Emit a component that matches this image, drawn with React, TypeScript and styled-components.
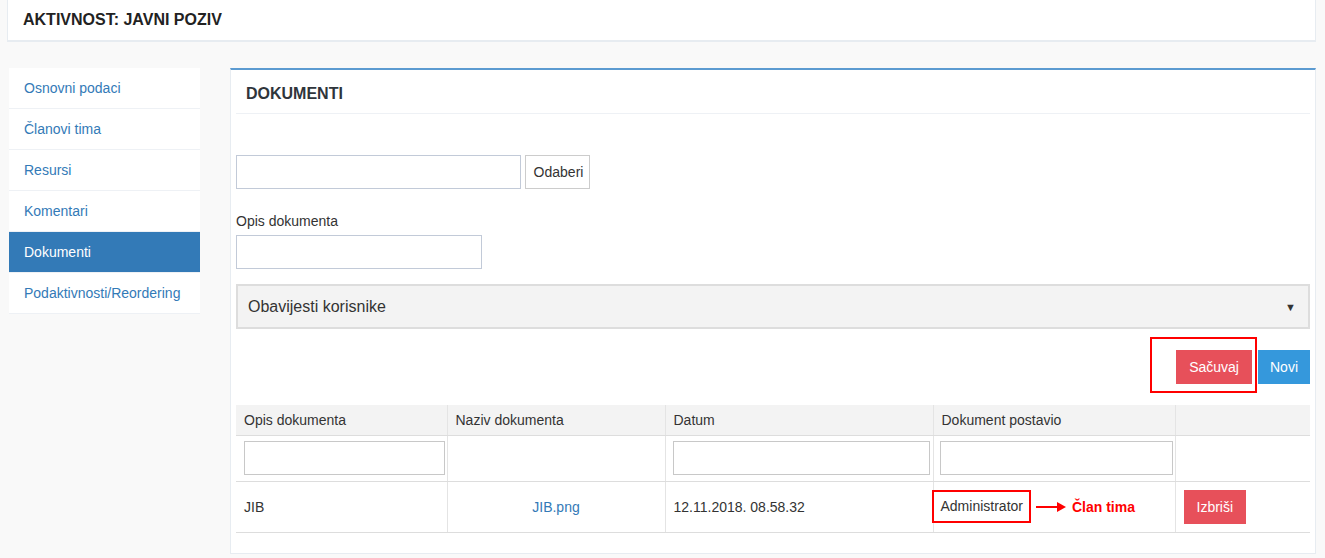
import React from "react";
import styled, { createGlobalStyle } from "styled-components";

const GlobalStyle = createGlobalStyle`
  body {
    margin: 0;
    background: #f9f9f9;
    font-family: "Liberation Sans", Arial, sans-serif;
    font-size: 14px;
    color: #333;
  }
  * { box-sizing: border-box; }
`;

const Page = styled.div`
  padding: 0 9px 0 7px;
`;

const Header = styled.div`
  height: 42px;
  background: #fff;
  border: 1px solid #e7ecf1;
  border-top: none;
  border-bottom-width: 2px;
  display: flex;
  align-items: center;
  padding-left: 15px;
`;

const PageTitle = styled.h1`
  margin: 0;
  font-size: 16px;
  font-weight: bold;
  color: #222;
`;

const Body = styled.div`
  display: flex;
  align-items: flex-start;
  margin-top: 26px;
`;

const Sidebar = styled.ul`
  list-style: none;
  margin: 0 0 0 2px;
  padding: 0;
  width: 191px;
  flex-shrink: 0;
  background: #fff;
`;

const NavItem = styled.li<{ $active?: boolean }>`
  height: 41px;
  display: flex;
  align-items: center;
  padding-left: 15px;
  border-bottom: 1px solid #eef1f5;
  background: ${(p) => (p.$active ? "#337ab7" : "#fff")};
  color: ${(p) => (p.$active ? "#fff" : "#337ab7")};
  font-size: 14px;
`;

const Panel = styled.section`
  flex: 1;
  margin-left: 30px;
  background: #fff;
  border: 1px solid #e7ecf1;
  border-top: 2px solid #5c9bd1;
  padding: 0 5px 20px;
`;

const PanelTitle = styled.div`
  height: 44px;
  display: flex;
  align-items: center;
  padding: 5px 0 0 10px;
  border-bottom: 1px solid #eef1f5;
  font-size: 16px;
  font-weight: bold;
  color: #2f353b;
`;

const FileRow = styled.div`
  display: flex;
  gap: 4px;
  margin-top: 41px;
`;

const TextInput = styled.input<{ $w?: number }>`
  height: 34px;
  width: ${(p) => (p.$w ? `${p.$w}px` : "100%")};
  border: 1px solid #c2cad8;
  background: #fff;
  padding: 6px 10px;
  font: inherit;
  outline: none;
`;

const PickButton = styled.button`
  height: 34px;
  width: 65px;
  border: 1px solid #ccc;
  background: #fff;
  font: inherit;
  color: #333;
  padding: 0 0 0 2px;
`;

const FieldLabel = styled.label`
  display: block;
  margin: 23px 0 5px;
  line-height: 18px;
`;

const SelectBox = styled.div`
  margin-top: 15px;
  height: 45px;
  background: #f3f3f3;
  border: 2px solid #ddd;
  display: flex;
  align-items: center;
  justify-content: space-between;
  padding: 0 12px 0 10px;
  font-size: 16px;
  color: #333;
`;

const Caret = styled.span`
  font-size: 11px;
  color: #333;
`;

const Actions = styled.div`
  display: flex;
  justify-content: flex-end;
  gap: 6px;
  margin-top: 21px;
`;

const Marked = styled.span`
  position: relative;
  display: inline-flex;
  &::after {
    content: "";
    position: absolute;
    top: -13px;
    right: -5px;
    bottom: -9px;
    left: -26px;
    border: 2px solid #f00;
    pointer-events: none;
  }
`;

const Button = styled.button<{ $kind: "danger" | "primary" }>`
  height: 34px;
  padding: 0 ${(p) => (p.$kind === "danger" ? 13 : 12)}px;
  border: none;
  font: inherit;
  color: #fff;
  background: ${(p) => (p.$kind === "danger" ? "#e7505a" : "#3598dc")};
`;

const Table = styled.table`
  margin-top: 21px;
  width: 100%;
  border-collapse: collapse;
  table-layout: fixed;
`;

const Col = styled.col<{ $w: number }>`
  width: ${(p) => p.$w}px;
`;

const Th = styled.th`
  background: #f3f3f3;
  height: 30px;
  font-weight: normal;
  text-align: left;
  padding: 0 8px;
  border-bottom: 1px solid #ddd;
  border-left: 1px solid #e4e4e4;
  &:first-child { border-left: none; }
`;

const Td = styled.td<{ $center?: boolean; $pad?: string }>`
  padding: ${(p) => p.$pad || "0 8px"};
  border-bottom: 1px solid #ddd;
  border-left: 1px solid #e4e4e4;
  text-align: ${(p) => (p.$center ? "center" : "left")};
  &:first-child { border-left: none; }
`;

const FilterRow = styled.tr`
  height: 46px;
`;

const DataRow = styled.tr`
  height: 51px;
`;

const FilterInput = styled.input`
  display: block;
  width: 100%;
  height: 34px;
  border: 1px solid #c8c8c8;
  font: inherit;
  outline: none;
`;

const FileLink = styled.a`
  color: #337ab7;
  text-decoration: none;
`;

const Boxed = styled.span`
  display: inline-block;
  border: 2px solid #f00;
  padding: 0 6px 0 7px;
  line-height: 29px;
  margin-left: -10px;
  vertical-align: middle;
`;

const Note = styled.span`
  display: inline-flex;
  align-items: center;
  gap: 6px;
  margin-left: 5px;
  color: #f00;
  font-weight: bold;
  vertical-align: middle;
`;

const Arrow = () => (
  <svg width="30" height="12" viewBox="0 0 30 12">
    <line x1="0" y1="6" x2="22" y2="6" stroke="#f00" strokeWidth="2" />
    <polygon points="21,1 30,6 21,11" fill="#f00" />
  </svg>
);

const navItems = [
  "Osnovni podaci",
  "Članovi tima",
  "Resursi",
  "Komentari",
  "Dokumenti",
  "Podaktivnosti/Reordering",
];

export default function App() {
  return (
    <Page>
      <GlobalStyle />
      <Header>
        <PageTitle>AKTIVNOST: JAVNI POZIV</PageTitle>
      </Header>
      <Body>
        <Sidebar>
          {navItems.map((n) => (
            <NavItem key={n} $active={n === "Dokumenti"}>
              {n}
            </NavItem>
          ))}
        </Sidebar>
        <Panel>
          <PanelTitle>DOKUMENTI</PanelTitle>
          <FileRow>
            <TextInput $w={285} />
            <PickButton>Odaberi</PickButton>
          </FileRow>
          <FieldLabel>Opis dokumenta</FieldLabel>
          <TextInput $w={246} />
          <SelectBox>
            <span>Obavijesti korisnike</span>
            <Caret>▼</Caret>
          </SelectBox>
          <Actions>
            <Marked>
              <Button $kind="danger">Sačuvaj</Button>
            </Marked>
            <Button $kind="primary">Novi</Button>
          </Actions>
          <Table>
            <colgroup>
              <Col $w={211} />
              <Col $w={218} />
              <Col $w={268} />
              <Col $w={242} />
              <Col $w={135} />
            </colgroup>
            <thead>
              <tr>
                <Th>Opis dokumenta</Th>
                <Th>Naziv dokumenta</Th>
                <Th>Datum</Th>
                <Th>Dokument postavio</Th>
                <Th />
              </tr>
            </thead>
            <tbody>
              <FilterRow>
                <Td $pad="0 2px 0 8px">
                  <FilterInput />
                </Td>
                <Td />
                <Td $pad="0 3px 0 7px">
                  <FilterInput />
                </Td>
                <Td $pad="0 2px 0 6px">
                  <FilterInput />
                </Td>
                <Td />
              </FilterRow>
              <DataRow>
                <Td>JIB</Td>
                <Td $center>
                  <FileLink href="#">JIB.png</FileLink>
                </Td>
                <Td>12.11.2018. 08.58.32</Td>
                <Td>
                  <Boxed>Administrator</Boxed>
                  <Note>
                    <Arrow />
                    Član tima
                  </Note>
                </Td>
                <Td>
                  <Button $kind="danger">Izbriši</Button>
                </Td>
              </DataRow>
            </tbody>
          </Table>
        </Panel>
      </Body>
    </Page>
  );
}
